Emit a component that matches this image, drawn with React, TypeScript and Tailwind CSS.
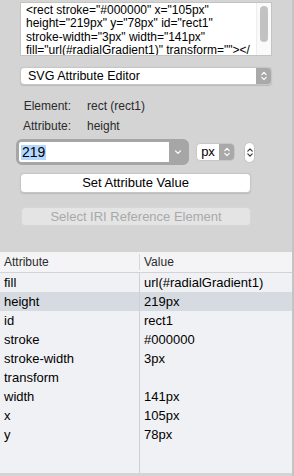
import React from "react";

type Row = { name: string; value: string; selected?: boolean };

const rows: Row[] = [
  { name: "fill", value: "url(#radialGradient1)" },
  { name: "height", value: "219px", selected: true },
  { name: "id", value: "rect1" },
  { name: "stroke", value: "#000000" },
  { name: "stroke-width", value: "3px" },
  { name: "transform", value: "" },
  { name: "width", value: "141px" },
  { name: "x", value: "105px" },
  { name: "y", value: "78px" },
];

const sourceLines = [
  '<rect stroke="#000000" x="105px"',
  'height="219px" y="78px" id="rect1"',
  'stroke-width="3px" width="141px"',
  'fill="url(#radialGradient1)" transform=""></',
];

const UpDown = ({ className }: { className?: string }) => (
  <svg
    viewBox="0 0 8 12"
    className={className}
    fill="none"
    stroke="currentColor"
    strokeWidth="1.2"
    strokeLinecap="round"
    strokeLinejoin="round"
  >
    <path d="M1.8 4.6 4 2.4l2.2 2.2M1.8 7.4 4 9.6l2.2-2.2" />
  </svg>
);

const ChevronDown = ({ className }: { className?: string }) => (
  <svg
    viewBox="0 0 8 6"
    className={className}
    fill="none"
    stroke="currentColor"
    strokeWidth="1.2"
    strokeLinecap="round"
    strokeLinejoin="round"
  >
    <path d="M1.5 1.8 4 4.3l2.5-2.5" />
  </svg>
);

const App = () => {
  return (
    <div className="flex h-[476px] w-[294px] overflow-hidden bg-[#d4d4d4] font-['Liberation_Sans',Arial,sans-serif] text-black">
      <div className="flex w-[292px] flex-col">
        <div className="flex flex-col pl-[20px] pt-[2px]">
          {/* source text */}
          <div className="flex h-[54px] w-[252px] border border-[#c3c3c3] bg-white">
            <div className="flex-1 overflow-hidden pl-[5px] pt-[1px] text-[12px] leading-[13.4px]">
              {sourceLines.map((line) => (
                <div key={line} className="whitespace-nowrap">
                  {line}
                </div>
              ))}
            </div>
            <div className="flex w-[15px] justify-center border-l border-[#ededed] bg-[#fafafa] pt-[3px]">
              <div className="h-[36px] w-[8px] rounded-full bg-[#c2c2c2]" />
            </div>
          </div>

          {/* editor select */}
          <div className="mt-[11px] flex h-[18px] w-[252px] overflow-hidden rounded-[4px] border border-[#c6c6c6] bg-white shadow-[0_0.5px_1px_rgba(0,0,0,0.12)]">
            <div className="flex flex-1 items-center pl-[7px] text-[12.5px]">
              SVG Attribute Editor
            </div>
            <div className="flex w-[15px] items-center justify-center bg-[#a9a9a9] text-white">
              <UpDown className="h-[12px] w-[8px]" />
            </div>
          </div>

          <div className="mt-[11px] flex h-[20px] items-center text-[12px] text-[#2b2b2b]">
            <span className="w-[51px] text-right">Element:</span>
            <span className="ml-[16px]">rect (rect1)</span>
          </div>
          <div className="flex h-[20px] items-center text-[12px] text-[#2b2b2b]">
            <span className="w-[51px] text-right">Attribute:</span>
            <span className="ml-[16px]">height</span>
          </div>

          {/* value controls */}
          <div className="mt-[3px] flex h-[26px] items-center">
            <div className="-ml-[4px] flex h-[26px] w-[173px] rounded-[6px] border-[3px] border-[#a6a6a6] bg-[#a6a6a6]">
              <div className="flex flex-1 items-center rounded-l-[2px] bg-white pl-[2px]">
                <span className="bg-[#b3d7ff] px-[1px] text-[14px] leading-[15px]">219</span>
              </div>
              <div className="flex w-[17px] items-center justify-center rounded-r-[3px] bg-[#a6a6a6] text-white">
                <ChevronDown className="h-[6px] w-[8px]" />
              </div>
            </div>
            <div className="ml-[7px] flex h-[18px] w-[39px] overflow-hidden rounded-[4px] border border-[#c6c6c6] bg-white">
              <div className="flex flex-1 items-center justify-center text-[13px]">px</div>
              <div className="flex w-[15px] items-center justify-center bg-[#a9a9a9] text-white">
                <UpDown className="h-[12px] w-[8px]" />
              </div>
            </div>
            <div className="ml-[9px] flex h-[21px] w-[11px] items-center justify-center rounded-full border border-[#c3c3c3] bg-white text-[#3a3a3a]">
              <UpDown className="h-[15px] w-[8px]" />
            </div>
          </div>

          <button
            type="button"
            className="mt-[8px] flex h-[20px] w-[231px] items-center justify-center rounded-[4px] border border-[#c6c6c6] bg-white text-[13px] shadow-[0_0.5px_1px_rgba(0,0,0,0.12)]"
          >
            Set Attribute Value
          </button>
          <button
            type="button"
            disabled
            className="ml-[1px] mt-[14px] flex h-[19px] w-[230px] items-center justify-center rounded-[4px] border border-[#d6d6d6] bg-[#e4e4e4] text-[13px] text-[#a9a9a9]"
          >
            Select IRI Reference Element
          </button>
        </div>

        {/* attribute table */}
        <div className="mt-[26px] flex h-[221px] flex-col bg-[#f0f1f4]">
          <div className="grid h-[21px] grid-cols-[140px_1fr] border-b border-[#d3d3d5] bg-[#f4f4f6] text-[12px] text-[#2b2b2b]">
            <div className="flex items-center justify-between pl-[4px]">
              <span>Attribute</span>
              <span className="h-[16px] w-px bg-[#d6d6d6]" />
            </div>
            <div className="flex items-center pl-[4px]">Value</div>
          </div>
          {rows.map((row) => (
            <div
              key={row.name}
              className={`grid h-[19px] grid-cols-[140px_1fr] text-[13px] leading-[19px] ${row.selected ? "bg-[#d6dae1]" : ""}`}
            >
              <div className="border-r border-[#d0d0d2] pl-[4px]">{row.name}</div>
              <div className="pl-[4px]">{row.value}</div>
            </div>
          ))}
          <div className="grid flex-1 grid-cols-[140px_1fr]">
            <div className="border-r border-[#d0d0d2]" />
            <div />
          </div>
        </div>
      </div>
      <div className="w-[2px] bg-[#c4c4c4]" />
    </div>
  );
};

export default App;
